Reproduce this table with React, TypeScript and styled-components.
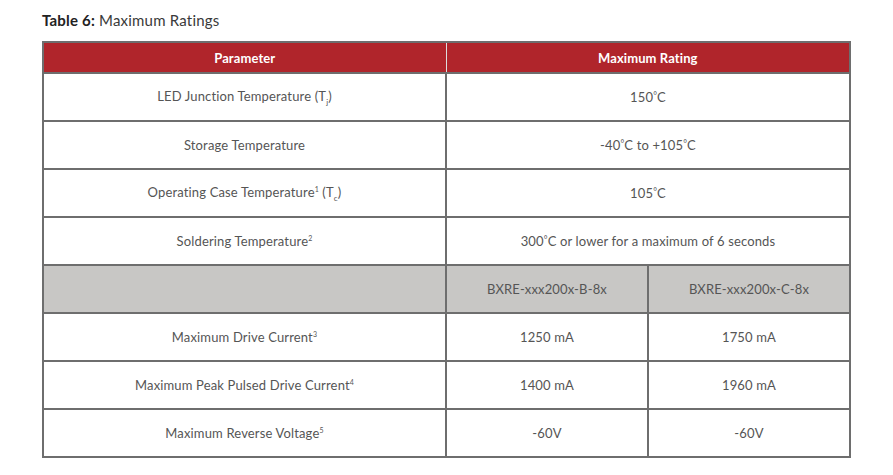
import React from 'react';
import styled, { createGlobalStyle } from 'styled-components';

const GlobalStyle = createGlobalStyle`
  body {
    margin: 0;
    background: #ffffff;
    font-family: 'Lato', 'Open Sans', sans-serif;
  }
`;

const Page = styled.div`
  padding: 11px 44px 0 42px;
  width: 893px;
  box-sizing: border-box;
`;

const Caption = styled.div`
  font-size: 15px;
  color: #3a3a3a;
  height: 30px;
  line-height: 18px;
  letter-spacing: 0.2px;
`;

const Strong = styled.span`
  font-weight: 700;
  color: #222;
`;

const Table = styled.table`
  width: 807px;
  border-collapse: collapse;
  table-layout: fixed;
  border: 2px solid #6e6e6e;
`;

const HeadCell = styled.th`
  background: #b0252b;
  color: #ffffff;
  font-size: 13px;
  font-weight: 700;
  letter-spacing: 0.1px;
  height: 29px;
  padding: 0;
  text-align: center;
  border: 1px solid #ddd;
  border-bottom: 2px solid #6e6e6e;
`;

const Cell = styled.td<{ $shade?: boolean }>`
  background: ${(p) => (p.$shade ? '#c8c7c5' : '#ffffff')};
  color: #555;
  font-size: 13px;
  letter-spacing: 0.15px;
  height: 46px;
  padding: 0;
  text-align: center;
  border: 2px solid #6e6e6e;
`;

const Sup = styled.sup`
  font-size: 7px;
  vertical-align: 5px;
`;

const Sub = styled.sub`
  font-size: 8px;
  vertical-align: -4px;
`;

const Deg = styled.span`
  font-size: 9px;
  vertical-align: 3px;
`;

const single = [
  { p: <>LED Junction Temperature (T<Sub>j</Sub>)</>, v: <>150<Deg>°</Deg>C</> },
  { p: <>Storage Temperature</>, v: <>-40<Deg>°</Deg>C to +105<Deg>°</Deg>C</> },
  { p: <>Operating Case Temperature<Sup>1</Sup> (T<Sub>c</Sub>)</>, v: <>105<Deg>°</Deg>C</> },
  { p: <>Soldering Temperature<Sup>2</Sup></>, v: <>300<Deg>°</Deg>C or lower for a maximum of 6 seconds</> },
];

const dual = [
  { p: <>Maximum Drive Current<Sup>3</Sup></>, b: '1250 mA', c: '1750 mA' },
  { p: <>Maximum Peak Pulsed Drive Current<Sup>4</Sup></>, b: '1400 mA', c: '1960 mA' },
  { p: <>Maximum Reverse Voltage<Sup>5</Sup></>, b: '-60V', c: '-60V' },
];

export default function App() {
  return (
    <Page>
      <GlobalStyle />
      <Caption>
        <Strong>Table 6:</Strong> Maximum Ratings
      </Caption>
      <Table>
        <colgroup>
          <col style={{ width: '403px' }} />
          <col style={{ width: '202px' }} />
          <col style={{ width: '202px' }} />
        </colgroup>
        <thead>
          <tr>
            <HeadCell>Parameter</HeadCell>
            <HeadCell colSpan={2}>Maximum Rating</HeadCell>
          </tr>
        </thead>
        <tbody>
          {single.map((r, i) => (
            <tr key={i}>
              <Cell>{r.p}</Cell>
              <Cell colSpan={2}>{r.v}</Cell>
            </tr>
          ))}
          <tr>
            <Cell $shade />
            <Cell $shade>BXRE-xxx200x-B-8x</Cell>
            <Cell $shade>BXRE-xxx200x-C-8x</Cell>
          </tr>
          {dual.map((r, i) => (
            <tr key={i}>
              <Cell>{r.p}</Cell>
              <Cell>{r.b}</Cell>
              <Cell>{r.c}</Cell>
            </tr>
          ))}
        </tbody>
      </Table>
    </Page>
  );
}
